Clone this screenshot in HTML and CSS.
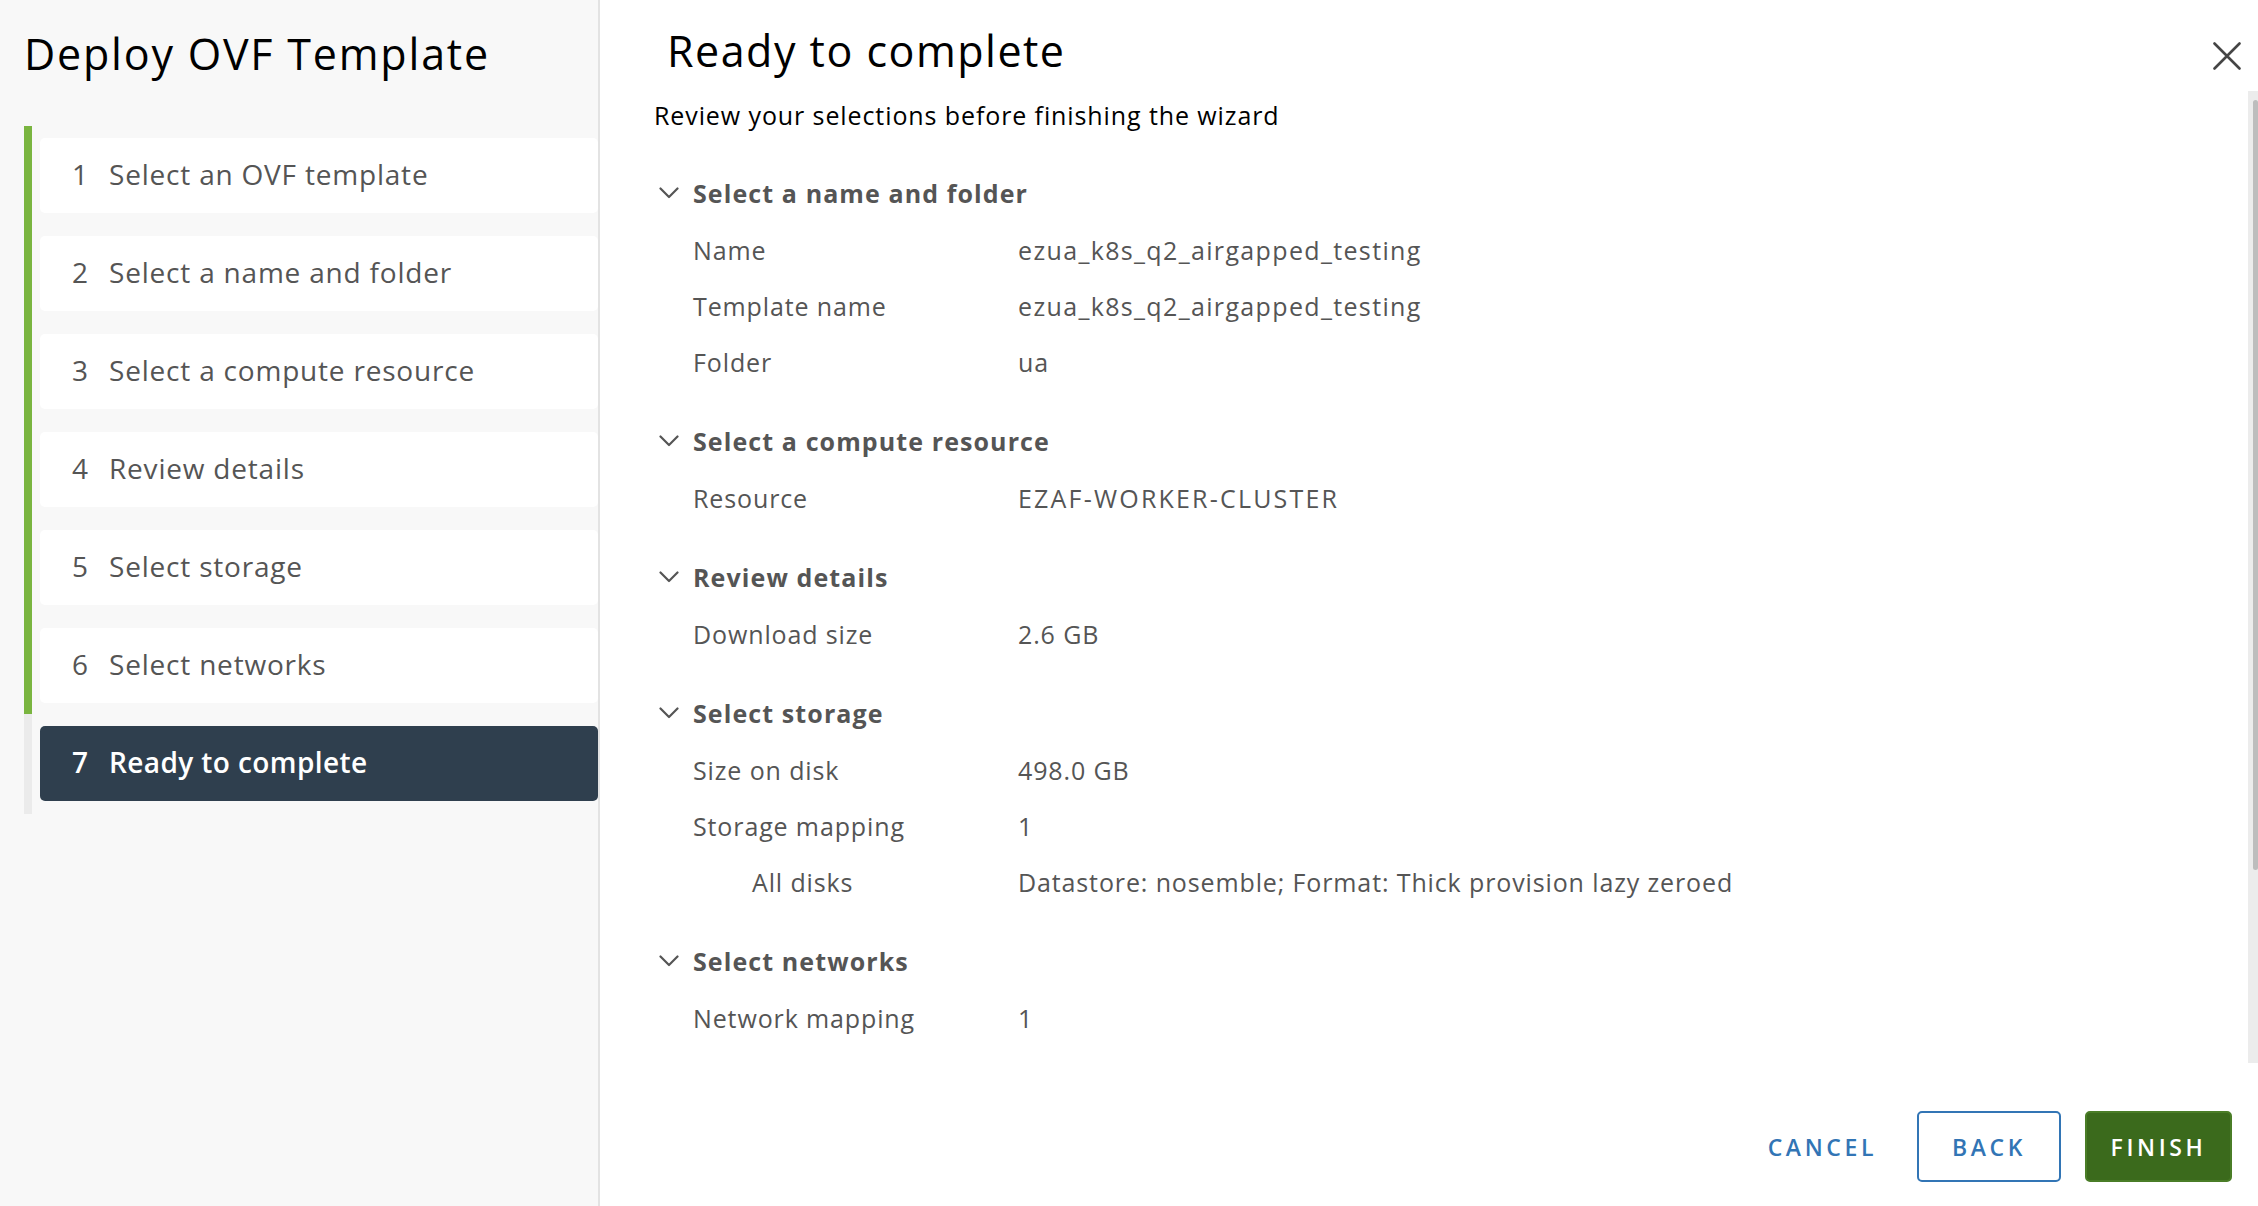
FILE: index.html
```html
<!DOCTYPE html>
<html lang="en">
<head>
<meta charset="utf-8">
<title>Deploy OVF Template</title>
<link rel="stylesheet" href="styles.css">
</head>
<body>
<div class="modal">
  <aside class="sidebar">
    <h1 class="wiz-title">Deploy OVF Template</h1>
    <ol class="steps">
      <li class="step done"><span class="num">1</span><span class="label">Select an OVF template</span></li>
      <li class="step done"><span class="num">2</span><span class="label">Select a name and folder</span></li>
      <li class="step done"><span class="num">3</span><span class="label">Select a compute resource</span></li>
      <li class="step done"><span class="num">4</span><span class="label">Review details</span></li>
      <li class="step done"><span class="num">5</span><span class="label">Select storage</span></li>
      <li class="step done"><span class="num">6</span><span class="label">Select networks</span></li>
      <li class="step active"><span class="num">7</span><span class="label">Ready to complete</span></li>
    </ol>
  </aside>
  <main class="content">
    <header class="content-head">
      <h2 class="page-title">Ready to complete</h2>
      <button class="close" aria-label="Close">
        <svg width="28" height="28" viewBox="0 0 28 28"><path d="M1.5 1.5 L26.5 26.5 M26.5 1.5 L1.5 26.5" stroke="#454545" stroke-width="2.6" stroke-linecap="round" fill="none"/></svg>
      </button>
    </header>
    <div class="body">
      <p class="subtitle">Review your selections before finishing the wizard</p>

      <section class="group">
        <div class="group-head"><svg class="chev" width="20" height="12" viewBox="0 0 20 12"><path d="M1.5 1.5 L10 10 L18.5 1.5" stroke="#555" stroke-width="2.2" fill="none" stroke-linecap="round" stroke-linejoin="round"/></svg><span>Select a name and folder</span></div>
        <div class="row"><span class="k">Name</span><span class="v id">ezua_k8s_q2_airgapped_testing</span></div>
        <div class="row"><span class="k">Template name</span><span class="v id">ezua_k8s_q2_airgapped_testing</span></div>
        <div class="row"><span class="k">Folder</span><span class="v">ua</span></div>
      </section>

      <section class="group">
        <div class="group-head"><svg class="chev" width="20" height="12" viewBox="0 0 20 12"><path d="M1.5 1.5 L10 10 L18.5 1.5" stroke="#555" stroke-width="2.2" fill="none" stroke-linecap="round" stroke-linejoin="round"/></svg><span>Select a compute resource</span></div>
        <div class="row"><span class="k">Resource</span><span class="v caps">EZAF-WORKER-CLUSTER</span></div>
      </section>

      <section class="group">
        <div class="group-head"><svg class="chev" width="20" height="12" viewBox="0 0 20 12"><path d="M1.5 1.5 L10 10 L18.5 1.5" stroke="#555" stroke-width="2.2" fill="none" stroke-linecap="round" stroke-linejoin="round"/></svg><span>Review details</span></div>
        <div class="row"><span class="k">Download size</span><span class="v">2.6 GB</span></div>
      </section>

      <section class="group">
        <div class="group-head"><svg class="chev" width="20" height="12" viewBox="0 0 20 12"><path d="M1.5 1.5 L10 10 L18.5 1.5" stroke="#555" stroke-width="2.2" fill="none" stroke-linecap="round" stroke-linejoin="round"/></svg><span>Select storage</span></div>
        <div class="row"><span class="k">Size on disk</span><span class="v">498.0 GB</span></div>
        <div class="row"><span class="k">Storage mapping</span><span class="v">1</span></div>
        <div class="row sub"><span class="k">All disks</span><span class="v">Datastore: nosemble; Format: Thick provision lazy zeroed</span></div>
      </section>

      <section class="group">
        <div class="group-head"><svg class="chev" width="20" height="12" viewBox="0 0 20 12"><path d="M1.5 1.5 L10 10 L18.5 1.5" stroke="#555" stroke-width="2.2" fill="none" stroke-linecap="round" stroke-linejoin="round"/></svg><span>Select networks</span></div>
        <div class="row"><span class="k">Network mapping</span><span class="v">1</span></div>
      </section>
    </div>
    <div class="scrollbar"><div class="thumb"></div></div>
    <footer class="actions">
      <button class="btn btn-flat">CANCEL</button>
      <button class="btn btn-outline">BACK</button>
      <button class="btn btn-primary">FINISH</button>
    </footer>
  </main>
</div>
</body>
</html>
```

FILE: styles.css
```css
* { box-sizing: border-box; }
html, body { margin: 0; padding: 0; }
body {
  width: 2258px;
  height: 1206px;
  overflow: hidden;
  font-family: "Open Sans", "Noto Sans", "Liberation Sans", sans-serif;
  background: #fff;
}
.modal {
  display: flex;
  height: 1206px;
}

/* ---------- sidebar ---------- */
.sidebar {
  width: 600px;
  flex: 0 0 600px;
  background: #f8f8f8;
  border-right: 2px solid #e3e3e3;
  padding: 24px 0 0 24px;
}
.wiz-title {
  margin: 0 0 42px 0;
  font-size: 43px;
  line-height: 60px;
  font-weight: 400;
  letter-spacing: 1.8px;
  color: #000;
}
.steps {
  list-style: none;
  margin: 0;
  padding: 12px 0 13px 8px;
  border-left: 8px solid #ebebeb;
}
.step {
  position: relative;
  height: 75px;
  margin-bottom: 23px;
  background: #fff;
  border-radius: 5px;
  display: flex;
  align-items: center;
  padding: 0 0 3px 32px;
  font-size: 28px;
  letter-spacing: 0.8px;
  color: #555;
}
.step:last-child { margin-bottom: 0; }
.step.done::before {
  content: "";
  position: absolute;
  left: -16px;
  top: -12px;
  bottom: -11px;
  width: 8px;
  background: #7ab540;
}
.step .num {
  width: 37px;
  flex: 0 0 37px;
}
.step.active {
  background: #2f3f4e;
  color: #fff;
  font-weight: 600;
  letter-spacing: 0.4px;
}

/* ---------- content ---------- */
.content {
  flex: 1;
  position: relative;
  display: flex;
  flex-direction: column;
  background: #fff;
}
.content-head {
  display: flex;
  justify-content: space-between;
  align-items: flex-start;
  padding: 21px 17px 0 67px;
  height: 81px;
}
.page-title {
  margin: 0;
  font-size: 43px;
  line-height: 60px;
  font-weight: 400;
  letter-spacing: 1.5px;
  color: #000;
}
.close {
  margin-top: 21px;
  width: 28px;
  height: 28px;
  padding: 0;
  border: 0;
  background: transparent;
  display: block;
}
.close svg { display: block; }

.body {
  flex: 1;
  padding-left: 54px;
  overflow: hidden;
}
.subtitle {
  margin: 16px 0 31px 0;
  font-size: 25px;
  line-height: 36px;
  letter-spacing: 0.9px;
  color: #000;
}
.group { margin-bottom: 22px; }
.group-head {
  height: 58px;
  display: flex;
  align-items: center;
  padding-left: 5px;
  font-size: 25px;
  font-weight: 700;
  letter-spacing: 1.1px;
  color: #555;
}
.group-head .chev {
  margin-right: 14px;
  flex: 0 0 20px;
}
.row {
  height: 56px;
  display: flex;
  align-items: center;
  padding-left: 39px;
  font-size: 25px;
  letter-spacing: 0.875px;
  color: #555;
}
.row .k { width: 325px; flex: 0 0 325px; }
.row .v.id { letter-spacing: 1.35px; }
.row .v.caps { letter-spacing: 2.2px; }
.row.sub .k { padding-left: 59px; }

.scrollbar {
  position: absolute;
  right: 0;
  top: 91px;
  height: 972px;
  width: 10px;
  background: #ececec;
}
.scrollbar .thumb {
  position: absolute;
  right: 0;
  top: 9px;
  width: 5px;
  height: 770px;
  border-radius: 4px;
  background: #bdbdbd;
}

.actions {
  display: flex;
  justify-content: flex-end;
  align-items: center;
  gap: 24px;
  padding: 0 26px 24px 0;
}
.btn {
  height: 71px;
  padding: 0 20px;
  border-radius: 5px;
  font-family: "Open Sans", "Noto Sans", sans-serif;
  font-size: 23px;
  font-weight: 600;
  letter-spacing: 3.6px;
  background: transparent;
  border: 2px solid transparent;
}
.btn-flat { color: #3275b5; padding: 0 14px; }
.btn-outline { color: #3275b5; border-color: #3275b5; background: #fff; width: 144px; }
.btn-primary { color: #fff; background: #3b6a1c; border-color: #4a7d27; width: 147px; }
```
